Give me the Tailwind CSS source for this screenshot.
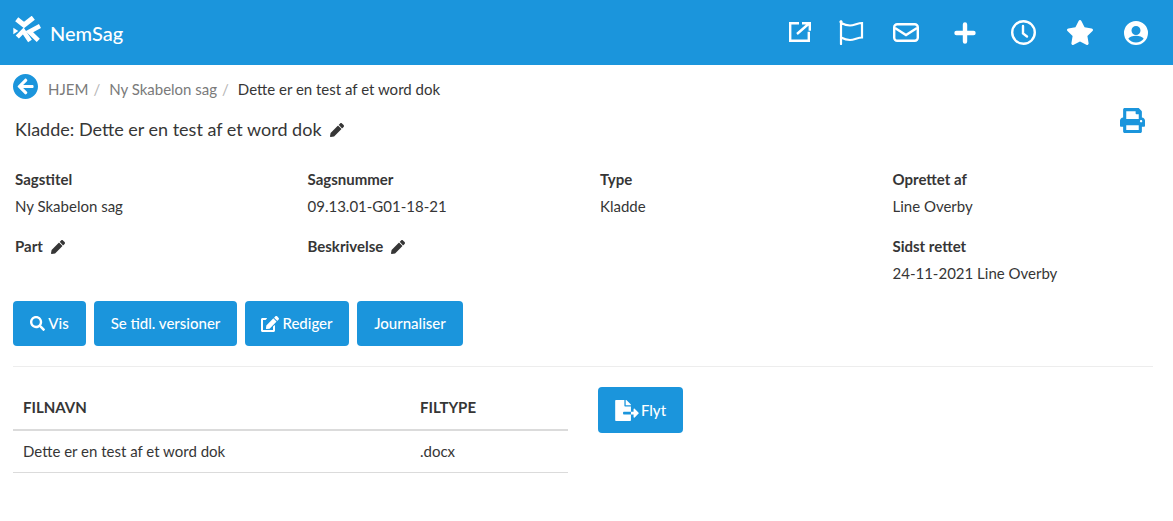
<!DOCTYPE html>
<html lang="da">
<head>
    <meta charset="UTF-8">
    <title>NemSag</title>
    <script src="https://cdn.jsdelivr.net/npm/@tailwindcss/browser@4"></script>
</head>
<body class="bg-white text-[#363636] font-['Lato',sans-serif] text-[15px] leading-[21px]">
    <!-- top bar -->
    <nav class="h-[65px] bg-[#1b95dc] flex items-center justify-between pl-[13px] pr-[25px] text-white">
        <div class="flex items-center gap-[9px]">
            <svg class="w-[28px] h-[30px] -mt-[4px]" viewBox="0 0 28 30" fill="white">
                <path d="M3.700 3.300L11 9l9.300-7.300" fill="none" stroke="white" stroke-width="5"/>
                <path d="M27 10l-10.700 5.700L25.300 24.300" fill="none" stroke="white" stroke-width="4.500"/>
                <path d="M4.300 21L10.300 15l6.700 10" fill="none" stroke="white" stroke-width="4.500"/>
                <path d="M0.300 11.700L5.300 15l-5 3.300z"/>
            </svg>
            <span class="text-[20px] font-medium mt-[1px]">NemSag</span>
        </div>
        <div class="flex items-center">
            <svg class="w-[22px] h-[20px] -mt-[1px]" viewBox="0 0 22 20" fill="none" stroke="white" stroke-width="2.4">
                <path d="M10 1.200H1.200v17.600h18.600v-9M8 12L20 1.500M13 1.200h7.800v7.500"/>
            </svg>
            <svg class="w-[25px] h-[25px] ml-[28px]" viewBox="0 0 25 25" fill="none" stroke="white" stroke-width="2.200" stroke-linecap="round">
                <path d="M2 1.500v22.500M2 3c3 1.500 5 2.500 9 2.500s8-2.500 12-2.500v14.500c-4 0-8 2.500-12 2.500s-6-1-9-2.500"/>
                <circle cx="2" cy="1.800" r="1.600" fill="white" stroke="none"/>
            </svg>
            <svg class="w-[26px] h-[19px] ml-[29px]" viewBox="0 0 26 19" fill="none" stroke="white" stroke-width="2.400">
                <rect x="1.200" y="1.200" width="23.600" height="16.600" rx="3"/>
                <path d="M2 5l11 7 11-7"/>
            </svg>
            <svg class="w-[22px] h-[22px] ml-[35px]" viewBox="0 0 22 22" fill="none" stroke="white" stroke-width="4.400" stroke-linecap="round">
                <path d="M11 2.500v17M2.500 11h17"/>
            </svg>
            <svg class="w-[25px] h-[25px] ml-[35px]" viewBox="0 0 25 25" fill="none" stroke="white" stroke-width="2.400" stroke-linecap="round">
                <circle cx="12.500" cy="12.500" r="11.300"/>
                <path d="M12 6v7.500l4 3"/>
            </svg>
            <svg class="w-[28px] h-[25px] ml-[30px]" viewBox="0 0 576 512" fill="white">
                <path d="M259.300 17.800L194 150.200 47.900 171.500c-26.200 3.800-36.700 36.100-17.700 54.600l105.700 103-25 145.500c-4.500 26.300 23.200 46 46.400 33.700L288 439.600l130.700 68.700c23.200 12.200 50.900-7.400 46.400-33.700l-25-145.500 105.700-103c19-18.500 8.500-50.800-17.700-54.600L382 150.200 316.700 17.800c-11.700-23.600-45.600-23.900-57.400 0z"/>
            </svg>
            <svg class="w-[24px] h-[24px] ml-[30px]" viewBox="1 1 24 24" fill="white">
                <path fill-rule="evenodd" d="M13 1a12 12 0 1 0 0 24 12 12 0 0 0 0-24zm0 5a4.500 4.500 0 1 1 0 9 4.500 4.500 0 0 1 0-9zm0 16.500c-3.200 0-6-1.500-7.700-3.800 1-2 4.500-3 7.700-3s6.700 1 7.700 3c-1.700 2.300-4.500 3.800-7.700 3.800z"/>
            </svg>
        </div>
    </nav>

    <main class="px-[15px]">
        <!-- breadcrumb -->
        <div class="flex items-center pt-[8px] -ml-[2px]">
            <svg class="w-[25px] h-[25px]" viewBox="8 8 496 496" fill="#1b95dc">
                <path d="M256 504C119 504 8 393 8 256S119 8 256 8s248 111 248 248-111 248-248 248zm28.900-143.600L209.400 288H392c13.300 0 24-10.700 24-24v-16c0-13.300-10.700-24-24-24H209.400l75.500-72.400c9.700-9.300 9.900-24.800.4-34.300l-11-10.900c-9.400-9.400-24.600-9.400-33.900 0L107.700 239c-9.400 9.400-9.400 24.600 0 33.900l132.700 132.700c9.400 9.400 24.600 9.400 33.900 0l11-10.900c9.500-9.500 9.300-25-.4-34.300z"/>
            </svg>
            <ol class="flex items-center ml-[10px] mt-[6px]">
                <li class="text-[#7a7a7a]">HJEM</li>
                <li class="text-[#b5b5b5] pl-[5px] pr-[9px]">/</li>
                <li class="text-[#7a7a7a]">Ny Skabelon sag</li>
                <li class="text-[#b5b5b5] pl-[5px] pr-[9px]">/</li>
                <li class="text-[#363636]">Dette er en test af et word dok</li>
            </ol>
        </div>

        <!-- title -->
        <div class="flex items-start justify-between mt-[11px] pr-[13px]">
            <h1 class="flex items-center gap-[8px] text-[18px] leading-[27px] mt-[5px]">
                Kladde: Dette er en test af et word dok
                <svg class="w-[14px] h-[14px] fill-[#363636]" viewBox="0 0 512 512"><path d="M497.900 142.100l-46.100 46.100c-4.700 4.700-12.300 4.700-17 0l-111-111c-4.700-4.700-4.700-12.300 0-17l46.100-46.100c18.700-18.700 49.100-18.700 67.900 0l60.100 60.100c18.800 18.700 18.800 49.100 0 67.900zM284.200 99.800L21.600 362.400.4 483.900c-2.900 16.400 11.400 30.600 27.800 27.800l121.500-21.300 262.600-262.600c4.700-4.700 4.700-12.300 0-17l-111-111c-4.800-4.700-12.400-4.700-17.100 0z"/></svg>
            </h1>
            <svg class="w-[25px] h-[25px] fill-[#1b95dc] -mt-[3px] -mb-[3px]" viewBox="0 0 512 512"><path d="M448 192V77.250c0-8.490-3.370-16.620-9.370-22.630L393.370 9.370c-6-6-14.140-9.370-22.630-9.370H96C78.330 0 64 14.330 64 32v160c-35.350 0-64 28.650-64 64v112c0 8.840 7.160 16 16 16h48v96c0 17.670 14.330 32 32 32h320c17.670 0 32-14.330 32-32v-96h48c8.840 0 16-7.160 16-16V256c0-35.350-28.650-64-64-64zm-64 256H128v-96h256v96zm0-224H128V64h192v48c0 8.840 7.160 16 16 16h48v96zm48 72c-13.250 0-24-10.750-24-24 0-13.260 10.750-24 24-24s24 10.740 24 24c0 13.250-10.750 24-24 24z"/></svg>
        </div>

        <!-- meta -->
        <div class="grid grid-cols-[292.500px_292.500px_292.500px_1fr] mt-[26px]">
            <div>
                <div class="font-bold">Sagstitel</div>
                <div class="mt-[6px]">Ny Skabelon sag</div>
            </div>
            <div>
                <div class="font-bold">Sagsnummer</div>
                <div class="mt-[6px]">09.13.01-G01-18-21</div>
            </div>
            <div>
                <div class="font-bold">Type</div>
                <div class="mt-[6px]">Kladde</div>
            </div>
            <div>
                <div class="font-bold">Oprettet af</div>
                <div class="mt-[6px]">Line Overby</div>
            </div>
            <div class="mt-[19px] flex items-center gap-[8px] h-[21px] font-bold">
                Part
                <svg class="w-[14px] h-[14px] fill-[#363636]" viewBox="0 0 512 512"><path d="M497.900 142.100l-46.100 46.100c-4.700 4.700-12.300 4.700-17 0l-111-111c-4.700-4.700-4.700-12.300 0-17l46.100-46.100c18.700-18.700 49.100-18.700 67.900 0l60.100 60.100c18.800 18.700 18.800 49.100 0 67.900zM284.200 99.800L21.600 362.400.4 483.900c-2.900 16.400 11.400 30.600 27.800 27.800l121.500-21.300 262.600-262.600c4.700-4.700 4.700-12.300 0-17l-111-111c-4.800-4.700-12.400-4.700-17.100 0z"/></svg>
            </div>
            <div class="mt-[19px] flex items-center gap-[8px] h-[21px] font-bold">
                Beskrivelse
                <svg class="w-[14px] h-[14px] fill-[#363636]" viewBox="0 0 512 512"><path d="M497.900 142.100l-46.100 46.100c-4.700 4.700-12.300 4.700-17 0l-111-111c-4.700-4.700-4.700-12.300 0-17l46.100-46.100c18.700-18.700 49.100-18.700 67.900 0l60.100 60.100c18.800 18.700 18.800 49.100 0 67.900zM284.200 99.800L21.600 362.400.4 483.900c-2.900 16.400 11.400 30.600 27.800 27.800l121.500-21.300 262.600-262.600c4.700-4.700 4.700-12.300 0-17l-111-111c-4.800-4.700-12.400-4.700-17.100 0z"/></svg>
            </div>
            <div></div>
            <div class="mt-[19px]">
                <div class="font-bold">Sidst rettet</div>
                <div class="mt-[6px]">24-11-2021 Line Overby</div>
            </div>
        </div>

        <!-- actions -->
        <div class="flex gap-[8px] mt-[17px] -ml-[2px] font-medium text-white">
            <button class="h-[45px] w-[73px] bg-[#1b95dc] rounded-[4px] flex items-center justify-center gap-[3px]">
                <svg class="w-[15px] h-[15px] fill-white" viewBox="0 0 512 512"><path d="M505 442.700L405.300 343c-4.500-4.500-10.600-7-17-7H372c27.600-35.300 44-79.700 44-128C416 93.100 322.900 0 208 0S0 93.100 0 208s93.100 208 208 208c48.300 0 92.700-16.400 128-44v16.300c0 6.400 2.500 12.500 7 17l99.700 99.700c9.400 9.400 24.600 9.400 33.900 0l28.300-28.300c9.400-9.400 9.400-24.600.1-34zM208 336c-70.700 0-128-57.200-128-128 0-70.700 57.200-128 128-128 70.700 0 128 57.200 128 128 0 70.700-57.200 128-128 128z"/></svg>
                Vis
            </button>
            <button class="h-[45px] w-[143px] bg-[#1b95dc] rounded-[4px]">Se tidl. versioner</button>
            <button class="h-[45px] w-[104px] bg-[#1b95dc] rounded-[4px] flex items-center justify-center gap-[3px]">
                <svg class="w-[18px] h-[16px] fill-white" viewBox="0 0 576 512"><path d="M402.600 83.200l90.200 90.200c3.800 3.800 3.800 10 0 13.800L274.400 405.600l-92.800 10.300c-12.400 1.400-22.900-9.100-21.500-21.500l10.300-92.800L388.800 83.200c3.800-3.800 10-3.800 13.800 0zm162-22.900l-48.800-48.800c-15.200-15.200-39.900-15.200-55.200 0l-35.400 35.400c-3.800 3.800-3.800 10 0 13.800l90.200 90.200c3.800 3.800 10 3.800 13.800 0l35.400-35.400c15.200-15.300 15.200-40 0-55.200zM384 346.200V448H64V128h73.100c3.200 0 6.200-1.300 8.500-3.500l40-40c7.600-7.600 2.200-20.500-8.500-20.500H48C21.500 64 0 85.500 0 112v352c0 26.500 21.500 48 48 48h352c26.500 0 48-21.500 48-48V306.200c0-10.700-12.900-16-20.500-8.500l-40 40c-2.200 2.300-3.500 5.300-3.500 8.500z"/></svg>
                Rediger
            </button>
            <button class="h-[45px] w-[106px] bg-[#1b95dc] rounded-[4px]">Journaliser</button>
        </div>

        <hr class="border-[#ededed] mt-[20px] -ml-[2px] mr-[5px]">

        <!-- files -->
        <div class="flex items-start mt-[20px] -ml-[2px]">
            <table class="w-[555px] table-fixed">
                <thead>
                    <tr class="border-b-2 border-[#dbdbdb] h-[43px]">
                        <th class="w-[407px] pl-[10px] pb-[2px] text-left font-bold">FILNAVN</th>
                        <th class="pb-[2px] text-left font-bold">FILTYPE</th>
                    </tr>
                </thead>
                <tbody>
                    <tr class="border-b border-[#dbdbdb] h-[42px]">
                        <td class="pl-[10px]">Dette er en test af et word dok</td>
                        <td>.docx</td>
                    </tr>
                </tbody>
            </table>
            <button class="ml-[30px] h-[46px] w-[85px] bg-[#1b95dc] rounded-[4px] flex items-center justify-center gap-[2px] text-white font-medium">
                <svg class="w-[24px] h-[21px] fill-white" viewBox="0 0 576 512"><path d="M384 121.900c0-6.300-2.500-12.400-7-16.900L279.100 7c-4.500-4.500-10.600-7-17-7H256v128h128zM571 308l-95.700-96.400c-10.100-10.100-27.400-3-27.400 11.300V288h-64v64h64v65.200c0 14.300 17.300 21.400 27.400 11.300L571 332c6.600-6.600 6.600-17.400 0-24zm-379 28v-32c0-8.800 7.200-16 16-16h176V160H248c-13.200 0-24-10.800-24-24V0H24C10.700 0 0 10.700 0 24v464c0 13.300 10.700 24 24 24h336c13.300 0 24-10.700 24-24V352H208c-8.800 0-16-7.200-16-16z"/></svg>
                Flyt
            </button>
        </div>
    </main>
</body>
</html>
